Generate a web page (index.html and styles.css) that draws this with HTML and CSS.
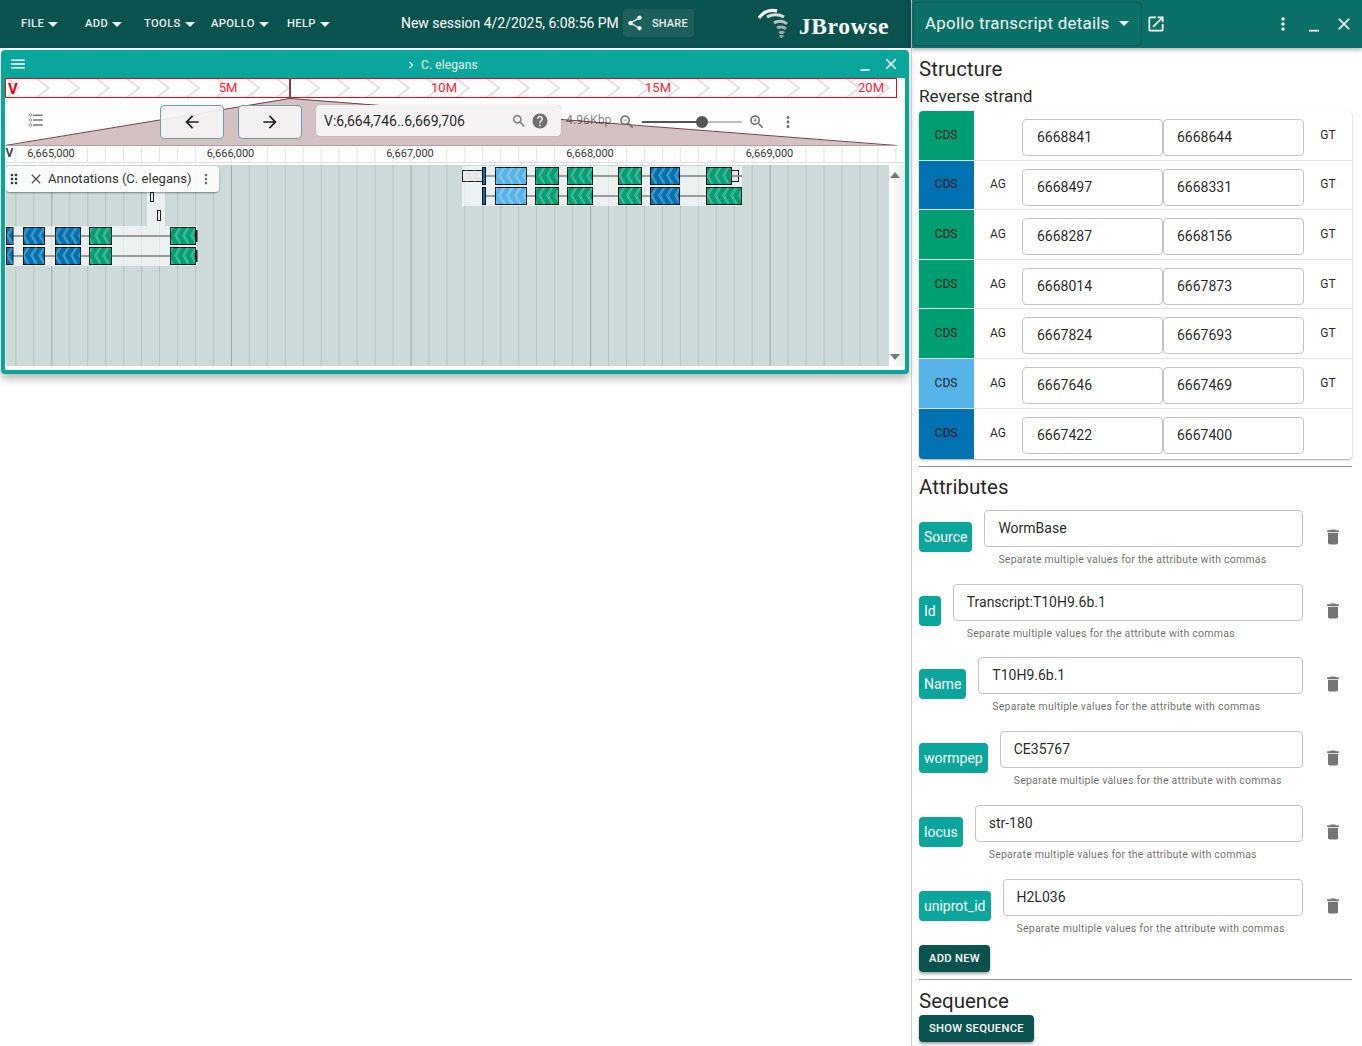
FILE: index.html
```html
<!DOCTYPE html>
<html lang="en">
<head>
    <meta charset="UTF-8">
    <title>JBrowse</title>
    <link rel="stylesheet" href="styles.css">
</head>
<body>
<svg class="sprites" width="0" height="0">
    <defs>
        <symbol id="i-drop" viewBox="0 0 24 24"><path d="M7 10l5 5 5-5z"/></symbol>
        <symbol id="i-back" viewBox="0 0 24 24"><path d="M20 11H7.83l5.59-5.59L12 4l-8 8 8 8 1.41-1.41L7.83 13H20v-2z"/></symbol>
        <symbol id="i-forward" viewBox="0 0 24 24"><path d="M12 4l-1.41 1.41L16.17 11H4v2h12.17l-5.58 5.59L12 20l8-8z"/></symbol>
        <symbol id="i-search" viewBox="0 0 24 24"><path d="M15.5 14h-.79l-.28-.27C15.41 12.59 16 11.11 16 9.5 16 5.91 13.09 3 9.5 3S3 5.91 3 9.5 5.91 16 9.5 16c1.61 0 3.09-.59 4.23-1.57l.27.28v.79l5 4.99L20.49 19l-4.99-5zm-6 0C7.01 14 5 11.99 5 9.5S7.01 5 9.5 5 14 7.01 14 9.5 11.99 14 9.5 14z"/></symbol>
        <symbol id="i-help" viewBox="0 0 24 24"><path d="M12 2C6.48 2 2 6.48 2 12s4.48 10 10 10 10-4.48 10-10S17.52 2 12 2zm1 17h-2v-2h2v2zm2.07-7.75l-.9.92C13.45 12.9 13 13.5 13 15h-2v-.5c0-1.1.45-2.1 1.17-2.83l1.24-1.26c.37-.36.59-.86.59-1.41 0-1.1-.9-2-2-2s-2 .9-2 2H8c0-2.21 1.79-4 4-4s4 1.79 4 4c0 .88-.36 1.68-.93 2.25z"/></symbol>
        <symbol id="i-zoomout" viewBox="0 0 24 24"><path d="M15.5 14h-.79l-.28-.27C15.41 12.59 16 11.11 16 9.5 16 5.91 13.09 3 9.5 3S3 5.91 3 9.5 5.91 16 9.5 16c1.61 0 3.09-.59 4.23-1.57l.27.28v.79l5 4.99L20.49 19l-4.99-5zm-6 0C7.01 14 5 11.99 5 9.5S7.01 5 9.5 5 14 7.01 14 9.5 11.99 14 9.5 14zM7 9h5v1H7z"/></symbol>
        <symbol id="i-zoomin" viewBox="0 0 24 24"><path d="M15.5 14h-.79l-.28-.27C15.41 12.59 16 11.11 16 9.5 16 5.91 13.09 3 9.5 3S3 5.91 3 9.5 5.91 16 9.5 16c1.61 0 3.09-.59 4.23-1.57l.27.28v.79l5 4.99L20.49 19l-4.99-5zm-6 0C7.01 14 5 11.99 5 9.5S7.01 5 9.5 5 14 7.01 14 9.5 11.99 14 9.5 14zM12 10h-2v2H9v-2H7V9h2V7h1v2h2v1z"/></symbol>
        <symbol id="i-more" viewBox="0 0 24 24"><path d="M12 8c1.1 0 2-.9 2-2s-.9-2-2-2-2 .9-2 2 .9 2 2 2zm0 2c-1.1 0-2 .9-2 2s.9 2 2 2 2-.9 2-2-.9-2-2-2zm0 6c-1.1 0-2 .9-2 2s.9 2 2 2 2-.9 2-2-.9-2-2-2z"/></symbol>
        <symbol id="i-close" viewBox="0 0 24 24"><path d="M19 6.41L17.59 5 12 10.59 6.41 5 5 6.41 10.59 12 5 17.59 6.41 19 12 13.41 17.59 19 19 17.59 13.41 12z"/></symbol>
        <symbol id="i-min" viewBox="0 0 24 24"><path d="M6 19h12v2H6z"/></symbol>
        <symbol id="i-menu" viewBox="0 0 24 24"><path d="M3 18h18v-2H3v2zm0-5h18v-2H3v2zm0-7v2h18V6H3z"/></symbol>
        <symbol id="i-share" viewBox="0 0 24 24"><path d="M18 16.08c-.76 0-1.44.3-1.96.77L8.91 12.7c.05-.23.09-.46.09-.7s-.04-.47-.09-.7l7.05-4.11c.54.5 1.25.81 2.04.81 1.66 0 3-1.34 3-3s-1.34-3-3-3-3 1.34-3 3c0 .24.04.47.09.7L8.04 9.81C7.5 9.31 6.79 9 6 9c-1.66 0-3 1.34-3 3s1.34 3 3 3c.79 0 1.5-.31 2.04-.81l7.12 4.16c-.05.21-.08.43-.08.65 0 1.61 1.31 2.92 2.92 2.92 1.61 0 2.92-1.31 2.92-2.92s-1.31-2.92-2.92-2.92z"/></symbol>
        <symbol id="i-open" viewBox="0 0 24 24"><path d="M19 19H5V5h7V3H5c-1.11 0-2 .9-2 2v14c0 1.1.89 2 2 2h14c1.1 0 2-.9 2-2v-7h-2v7zM14 3v2h3.59l-9.83 9.83 1.41 1.41L19 6.41V10h2V3h-7z"/></symbol>
        <symbol id="i-trash" viewBox="0 0 24 24"><path d="M6 19c0 1.1.9 2 2 2h8c1.1 0 2-.9 2-2V7H6v12zM19 4h-3.5l-1-1h-5l-1 1H5v2h14V4z"/></symbol>
        <symbol id="i-drag" viewBox="0 0 24 24"><path d="M11 18c0 1.1-.9 2-2 2s-2-.9-2-2 .9-2 2-2 2 .9 2 2zm-2-8c-1.1 0-2 .9-2 2s.9 2 2 2 2-.9 2-2-.9-2-2-2zm0-6c-1.1 0-2 .9-2 2s.9 2 2 2 2-.9 2-2-.9-2-2-2zm6 4c1.1 0 2-.9 2-2s-.9-2-2-2-2 .9-2 2 .9 2 2 2zm0 2c-1.1 0-2 .9-2 2s.9 2 2 2 2-.9 2-2-.9-2-2-2zm0 6c-1.1 0-2 .9-2 2s.9 2 2 2 2-.9 2-2-.9-2-2-2z"/></symbol>
        <symbol id="i-chevron" viewBox="0 0 24 24"><path d="M10 6L8.59 7.41 13.17 12l-4.58 4.59L10 18l6-6z"/></symbol>
        <symbol id="i-tracks" viewBox="0 0 24 24">
            <circle cx="4.5" cy="5.5" r="1.7" fill="none" stroke="currentColor" stroke-width="1"/>
            <circle cx="4.5" cy="12" r="1.7" fill="none" stroke="currentColor" stroke-width="1"/>
            <circle cx="4.5" cy="18.5" r="1.7" fill="none" stroke="currentColor" stroke-width="1"/>
            <path d="M8 4.5h13v2H8zM8 11h13v2H8zM8 17.5h13v2H8z"/>
        </symbol>
    </defs>
</svg>

<div class="app">
    <main class="main">
        <header class="topbar">
            <nav class="menu">
                <span class="menu-item item-file">FILE<svg class="icon-drop"><use href="#i-drop"/></svg></span>
                <span class="menu-item item-add">ADD<svg class="icon-drop"><use href="#i-drop"/></svg></span>
                <span class="menu-item item-tools">TOOLS<svg class="icon-drop"><use href="#i-drop"/></svg></span>
                <span class="menu-item item-apollo">APOLLO<svg class="icon-drop"><use href="#i-drop"/></svg></span>
                <span class="menu-item item-help">HELP<svg class="icon-drop"><use href="#i-drop"/></svg></span>
            </nav>
            <div class="session">New session 4/2/2025, 6:08:56 PM</div>
            <div class="share"><svg class="icon-share"><use href="#i-share"/></svg>SHARE</div>
            <div class="logo">
                <svg class="logo-mark" width="34" height="32" viewBox="0 0 34 32">
                    <path d="M1 11 C5 5 12 2 19 4" fill="none" stroke="#fff" stroke-width="3.4"/>
                    <path d="M9 10 C14 7 21 7 26 10" fill="none" stroke="#d9dedd" stroke-width="3"/>
                    <path d="M16 16 C20 13 26 14 29 17" fill="none" stroke="#b9c2c0" stroke-width="3"/>
                    <path d="M19 21 C22 19 26 20 28 22" fill="none" stroke="#a5aead" stroke-width="3"/>
                    <path d="M21 26 C23 25 25 25 26 26 M22 30 C23 29 24 29 25 30" fill="none" stroke="#9aa3a2" stroke-width="3"/>
                </svg>
                <span class="logo-text">JBrowse</span>
            </div>
        </header>

        <section class="view">
            <div class="view-title">
                <svg class="icon-18"><use href="#i-menu"/></svg>
                <div class="view-name"><svg class="icon-14"><use href="#i-chevron"/></svg>C. elegans</div>
                <svg class="icon-18 view-min"><use href="#i-min"/></svg>
                <svg class="icon-18 view-close"><use href="#i-close"/></svg>
            </div>
            <div class="view-body">
                <svg class="overview" width="900" height="20">
                    <defs>
                        <pattern id="ov-chev" width="30" height="20" patternUnits="userSpaceOnUse" x="-12">
                            <polyline points="13,0 26,10 13,20" fill="none" stroke="#dcdcdc" stroke-width="1.6"/>
                        </pattern>
                    </defs>
                    <rect x="0.5" y="0.5" width="891" height="19" fill="url(#ov-chev)" stroke="#e8001c"/>
                    <rect x="284" y="0" width="2" height="20" fill="#7a4048"/>
                    <text class="ov-v" x="3" y="15.5">V</text>
                    <text class="ov-label" x="223" y="14" text-anchor="middle">5M</text>
                    <text class="ov-label" x="439" y="14" text-anchor="middle">10M</text>
                    <text class="ov-label" x="653" y="14" text-anchor="middle">15M</text>
                    <text class="ov-label" x="866" y="14" text-anchor="middle">20M</text>
                </svg>
                <div class="nav">
                    <svg class="nav-zoom" width="900" height="48">
                        <polygon points="0,48 285,0 892,48" fill="#d3c1c4"/>
                        <polyline points="0,47.5 285,0.5 892,47.5" fill="none" stroke="#7a4048" stroke-width="1"/>
                        <line x1="0" y1="47.5" x2="892" y2="47.5" stroke="#b89ea2"/>
                    </svg>
                    <svg class="icon-tracks"><use href="#i-tracks"/></svg>
                    <button class="nav-btn btn-back"><svg class="icon-20"><use href="#i-back"/></svg></button>
                    <button class="nav-btn"><svg class="icon-20"><use href="#i-forward"/></svg></button>
                    <div class="locbox">
                        <span class="loc-text">V:6,664,746..6,669,706</span>
                        <svg class="icon-16 grey"><use href="#i-search"/></svg>
                        <svg class="icon-18 grey"><use href="#i-help"/></svg>
                    </div>
                    <span class="bp">4.96Kbp</span>
                    <svg class="icon-18 grey"><use href="#i-zoomout"/></svg>
                    <div class="slider"><div class="slider-fill"></div><div class="slider-thumb"></div></div>
                    <svg class="icon-18 grey"><use href="#i-zoomin"/></svg>
                    <svg class="icon-18 grey nav-more"><use href="#i-more"/></svg>
                </div>
                <svg class="ruler" width="900" height="19">
                    <defs>
                        <pattern id="ruler-grid" width="17.96" height="16" patternUnits="userSpaceOnUse" x="10.3">
                            <rect x="0" y="0" width="1" height="16" fill="#e3e3e3"/>
                        </pattern>
                    </defs>
                    <rect x="0" y="0" width="900" height="16" fill="url(#ruler-grid)"/>
                    <rect x="0" y="16" width="900" height="1" fill="#dfdfdf"/>
                    <text class="ruler-v" x="0.5" y="11">V</text>
                    <text class="ruler-label" x="46" y="11" text-anchor="middle">6,665,000</text>
                    <text class="ruler-label" x="225.5" y="11" text-anchor="middle">6,666,000</text>
                    <text class="ruler-label" x="405" y="11" text-anchor="middle">6,667,000</text>
                    <text class="ruler-label" x="585" y="11" text-anchor="middle">6,668,000</text>
                    <text class="ruler-label" x="764.5" y="11" text-anchor="middle">6,669,000</text>
                </svg>
                <div class="track-row">
                    <div class="track">
                        <svg class="track-canvas" width="883" height="201">
                            <defs>
                                <pattern id="grid" width="179.6" height="201" patternUnits="userSpaceOnUse" x="45.3">
                                    <rect x="0" width="1" height="201" fill="#97a6a6"/>
                                    <rect x="17.96" width="1" height="201" fill="#b3c1c1"/>
                                    <rect x="35.92" width="1" height="201" fill="#b3c1c1"/>
                                    <rect x="53.88" width="1" height="201" fill="#b3c1c1"/>
                                    <rect x="71.84" width="1" height="201" fill="#b3c1c1"/>
                                    <rect x="89.8" width="1" height="201" fill="#b3c1c1"/>
                                    <rect x="107.76" width="1" height="201" fill="#b3c1c1"/>
                                    <rect x="125.72" width="1" height="201" fill="#b3c1c1"/>
                                    <rect x="143.68" width="1" height="201" fill="#b3c1c1"/>
                                    <rect x="161.64" width="1" height="201" fill="#b3c1c1"/>
                                </pattern>
                                <pattern id="chev" width="8" height="17" patternUnits="userSpaceOnUse">
                                    <polyline points="6.5,0 1.5,8.5 6.5,17" fill="none" stroke="#fff" stroke-opacity=".25" stroke-width="2.5"/>
                                </pattern>
                                <g id="left-row">
                                    <line x1="0" y1="9" x2="190" y2="9" stroke="#808080" stroke-width="1.6"/>
                                    <rect class="cds blue" x="0.5" y="0.5" width="6.5" height="17"/><rect class="chevs" x="0.5" y="0.5" width="6.5" height="17"/>
                                    <rect class="cds blue" x="17.5" y="0.5" width="21" height="17"/><rect class="chevs" x="17.5" y="0.5" width="21" height="17"/>
                                    <rect class="cds blue" x="49.5" y="0.5" width="25" height="17"/><rect class="chevs" x="49.5" y="0.5" width="25" height="17"/>
                                    <rect class="cds green" x="83.5" y="0.5" width="22" height="17"/><rect class="chevs" x="83.5" y="0.5" width="22" height="17"/>
                                    <rect class="cds green" x="164.5" y="0.5" width="25" height="17"/><rect class="chevs" x="164.5" y="0.5" width="25" height="17"/>
                                    <rect x="190" y="3" width="1.5" height="12" fill="#222"/>
                                </g>
                                <g id="right-row">
                                    <line x1="0" y1="9" x2="260" y2="9" stroke="#808080" stroke-width="1.6"/>
                                    <rect class="cds blue" x="0.5" y="0.5" width="3" height="17"/>
                                    <rect class="cds sky" x="13.5" y="0.5" width="31" height="17"/><rect class="chevs" x="13.5" y="0.5" width="31" height="17"/>
                                    <rect class="cds green" x="53.5" y="0.5" width="23" height="17"/><rect class="chevs" x="53.5" y="0.5" width="23" height="17"/>
                                    <rect class="cds green" x="85.5" y="0.5" width="25" height="17"/><rect class="chevs" x="85.5" y="0.5" width="25" height="17"/>
                                    <rect class="cds green" x="136.5" y="0.5" width="23" height="17"/><rect class="chevs" x="136.5" y="0.5" width="23" height="17"/>
                                    <rect class="cds blue" x="168.5" y="0.5" width="29" height="17"/><rect class="chevs" x="168.5" y="0.5" width="29" height="17"/>
                                </g>
                            </defs>
                            <rect width="883" height="201" fill="#cddada"/>
                            <rect width="883" height="201" fill="url(#grid)"/>

                            <rect class="lane" x="141" y="1" width="18" height="60"/>
                            <rect class="tiny" x="144.5" y="27.5" width="3" height="9"/>
                            <rect class="tiny" x="151.5" y="45.5" width="3" height="10"/>

                            <rect class="lane" x="456" y="1" width="280" height="40"/>
                            <g transform="translate(456,2)">
                                <rect class="utr" x="0.5" y="3.5" width="20" height="11"/><rect class="chevs" x="0.5" y="3.5" width="20" height="11"/>
                                <rect class="utr" x="269.5" y="3.5" width="7" height="11"/>
                            </g>
                            <use href="#right-row" x="476" y="2"/>
                            <g transform="translate(700,2)">
                                <rect class="cds green" x="0.5" y="0.5" width="25" height="17"/><rect class="chevs" x="0.5" y="0.5" width="25" height="17"/>
                            </g>
                            <use href="#right-row" x="476" y="22"/>
                            <g transform="translate(700,22)">
                                <rect class="cds green" x="0.5" y="0.5" width="35" height="17"/><rect class="chevs" x="0.5" y="0.5" width="35" height="17"/>
                            </g>

                            <rect class="lane" x="0" y="61" width="191" height="40"/>
                            <use href="#left-row" y="62"/>
                            <use href="#left-row" y="82"/>
                        </svg>
                        <div class="track-label">
                            <svg class="icon-16"><use href="#i-drag"/></svg>
                            <svg class="icon-16 label-close"><use href="#i-close"/></svg>
                            <span class="label-text">Annotations (C. elegans)</span>
                            <svg class="icon-16 grey"><use href="#i-more"/></svg>
                        </div>
                    </div>
                    <div class="scrollbar">
                        <div class="arrow-up"></div>
                        <div class="arrow-down"></div>
                    </div>
                </div>
            </div>
        </section>
    </main>

    <aside class="drawer">
        <header class="drawer-head">
            <div class="drawer-select">Apollo transcript details<svg class="icon-24"><use href="#i-drop"/></svg></div>
            <svg class="icon-20 drawer-open"><use href="#i-open"/></svg>
            <svg class="icon-20 drawer-more"><use href="#i-more"/></svg>
            <svg class="icon-20 drawer-min"><use href="#i-min"/></svg>
            <svg class="icon-20 drawer-close"><use href="#i-close"/></svg>
        </header>
        <div class="drawer-body">
            <h2 class="heading head-structure">Structure</h2>
            <div class="strand">Reverse strand</div>
            <div class="exons">
                <div class="exon"><div class="type green">CDS</div><div class="site"></div><div class="field">6668841</div><div class="field">6668644</div><div class="site">GT</div></div>
                <div class="exon"><div class="type blue">CDS</div><div class="site">AG</div><div class="field">6668497</div><div class="field">6668331</div><div class="site">GT</div></div>
                <div class="exon"><div class="type green">CDS</div><div class="site">AG</div><div class="field">6668287</div><div class="field">6668156</div><div class="site">GT</div></div>
                <div class="exon"><div class="type green">CDS</div><div class="site">AG</div><div class="field">6668014</div><div class="field">6667873</div><div class="site">GT</div></div>
                <div class="exon"><div class="type green">CDS</div><div class="site">AG</div><div class="field">6667824</div><div class="field">6667693</div><div class="site">GT</div></div>
                <div class="exon"><div class="type sky">CDS</div><div class="site">AG</div><div class="field">6667646</div><div class="field">6667469</div><div class="site">GT</div></div>
                <div class="exon"><div class="type blue">CDS</div><div class="site">AG</div><div class="field">6667422</div><div class="field">6667400</div><div class="site"></div></div>
            </div>
            <hr class="rule rule-attrs">
            <h2 class="heading head-attrs">Attributes</h2>
            <div class="attr"><span class="chip">Source</span><div class="attr-main"><div class="attr-box">WormBase</div><div class="attr-help">Separate multiple values for the attribute with commas</div></div><svg class="icon-trash"><use href="#i-trash"/></svg></div>
            <div class="attr"><span class="chip">Id</span><div class="attr-main"><div class="attr-box">Transcript:T10H9.6b.1</div><div class="attr-help">Separate multiple values for the attribute with commas</div></div><svg class="icon-trash"><use href="#i-trash"/></svg></div>
            <div class="attr"><span class="chip">Name</span><div class="attr-main"><div class="attr-box">T10H9.6b.1</div><div class="attr-help">Separate multiple values for the attribute with commas</div></div><svg class="icon-trash"><use href="#i-trash"/></svg></div>
            <div class="attr"><span class="chip">wormpep</span><div class="attr-main"><div class="attr-box">CE35767</div><div class="attr-help">Separate multiple values for the attribute with commas</div></div><svg class="icon-trash"><use href="#i-trash"/></svg></div>
            <div class="attr"><span class="chip">locus</span><div class="attr-main"><div class="attr-box">str-180</div><div class="attr-help">Separate multiple values for the attribute with commas</div></div><svg class="icon-trash"><use href="#i-trash"/></svg></div>
            <div class="attr"><span class="chip">uniprot_id</span><div class="attr-main"><div class="attr-box">H2L036</div><div class="attr-help">Separate multiple values for the attribute with commas</div></div><svg class="icon-trash"><use href="#i-trash"/></svg></div>
            <button class="action action-add">ADD NEW</button>
            <hr class="rule rule-seq">
            <h2 class="heading head-seq">Sequence</h2>
            <button class="action">SHOW SEQUENCE</button>
        </div>
    </aside>
</div>
</body>
</html>
```

FILE: styles.css
```css
*{
    padding:0;
    margin:0;
    box-sizing:border-box;
}
html,body{
    height:100%;
    overflow:hidden;
}
body{
    font-family:Roboto,"Liberation Sans",sans-serif;
    color:rgba(0,0,0,.87);
    background:#fff;
    font-size:14px;
}
svg{
    fill:currentColor;
    display:block;
    flex:none;
}
.sprites{
    position:absolute;
}
.app{
    display:flex;
    height:100%;
}
.main{
    width:911px;
    flex:none;
}

/* top bar */
.topbar{
    height:48px;
    background:#0a524e;
    color:#fff;
    display:flex;
    align-items:center;
    margin-bottom:2px;
}
.menu{
    display:flex;
    padding-left:21px;
    width:401px;
    flex:none;
}
.menu-item{
    display:flex;
    align-items:center;
    font-size:11.2px;
    font-weight:500;
    letter-spacing:.35px;
    color:#e9f1f0;
    height:24px;
    position:relative;
    top:-1px;
}
.item-file{width:64px}
.item-add{width:59px}
.item-tools{width:67px}
.item-apollo{width:76px}
.item-help{width:90px}
.icon-drop{
    width:24px;
    height:24px;
    margin-left:-3px;
    position:relative;
    top:1px;
}
.session{
    font-size:13.95px;
    width:222px;
    flex:none;
    white-space:nowrap;
    position:relative;
    top:-1px;
}
.share{
    width:71px;
    height:28px;
    display:flex;
    align-items:center;
    background:rgba(255,255,255,.08);
    border-radius:4px;
    font-size:11px;
    font-weight:500;
    letter-spacing:.15px;
    padding-left:3px;
    gap:8px;
    position:relative;
    top:-1px;
    color:#e9f1f0;
}
.icon-share{
    width:18px;
    height:18px;
}
.logo{
    display:flex;
    align-items:center;
    margin-left:64px;
}
.logo-mark{
    margin-right:7px;
    position:relative;
    top:-1px;
}
.logo-text{
    font-family:"Liberation Serif",serif;
    font-weight:700;
    font-size:23.5px;
    letter-spacing:.6px;
    position:relative;
    top:2px;
}

/* linear genome view */
.view{
    margin-left:1px;
    width:908px;
    height:324px;
    background:#0aa69b;
    border-radius:4px;
    padding:0 4px 4px;
    box-shadow:0 5px 8px rgba(0,0,0,.28);
    color:#fff;
}
.view-title{
    height:28px;
    display:flex;
    align-items:center;
    padding-left:4px;
    position:relative;
}
.view-name{
    display:flex;
    align-items:center;
    font-size:12px;
    letter-spacing:.1px;
    color:#e8f6f5;
    margin-left:377px;
    padding-top:2px;
    gap:3px;
}
.view-min{
    margin-left:auto;
    margin-right:8px;
}
.view-close{
    margin-right:5px;
}
.view-body{
    background:#fff;
    height:292px;
    color:rgba(0,0,0,.87);
}
.overview .ov-v{
    font-size:15px;
    font-weight:700;
    fill:#e8001c;
}
.ov-label{
    font-size:13px;
    fill:#ff1a38;
}
.nav{
    position:relative;
    height:48px;
    display:flex;
    align-items:flex-start;
    padding-top:7px;
}
.nav-zoom{
    position:absolute;
    left:0;
    top:0;
}
.nav>*:not(.nav-zoom){
    position:relative;
}
.icon-tracks{
    width:18px;
    height:18px;
    margin:6px 106px 0 22px;
    color:#777;
}
.nav-btn{
    width:64px;
    height:34px;
    background:rgba(245,244,244,.92);
    border:1px solid #6f9e9c;
    border-radius:4px;
    display:flex;
    align-items:center;
    justify-content:center;
    color:rgba(0,0,0,.87);
    margin-right:14px;
}
.btn-back{
    margin-left:9px;
}
.locbox{
    width:245px;
    height:31px;
    background:#f4f2f2;
    border-radius:4px;
    box-shadow:0 0 1px rgba(0,0,0,.4);
    display:flex;
    align-items:center;
    padding:0 12px 0 8px;
    gap:4px;
    margin-right:5px;
}
.loc-text{
    font-size:14px;
    margin-right:auto;
}
.grey{
    color:#6f6f6f;
}
.bp{
    font-size:12.3px;
    color:rgba(0,0,0,.5);
    width:52px;
    margin-top:8px;
}
.nav .icon-18{
    margin-top:8px;
}
.locbox .icon-18,.nav .locbox .icon-18{
    margin-top:0;
}
.icon-14{width:14px;height:14px}
.icon-16{width:16px;height:16px}
.icon-18{width:18px;height:18px}
.icon-20{width:20px;height:20px}
.icon-24{width:24px;height:24px}
.slider{
    width:100px;
    height:12px;
    margin:11px 6px 0 6px;
    position:relative;
}
.slider::before{
    content:"";
    position:absolute;
    left:0;
    right:0;
    top:5px;
    height:2px;
    background:#bdbdbd;
}
.slider-fill{
    position:absolute;
    left:0;
    top:5px;
    height:2px;
    width:60px;
    background:#555;
}
.slider-thumb{
    position:absolute;
    left:54px;
    top:0;
    width:12px;
    height:12px;
    border-radius:50%;
    background:#555;
}
.nav-more{
    margin-left:13px;
}
.ruler-label{
    font-size:11px;
    fill:#333;
    stroke:#fff;
    stroke-width:3px;
    paint-order:stroke;
}
.ruler-v{
    font-size:12px;
    font-weight:700;
    fill:#444;
}
.track-row{
    display:flex;
    height:201px;
}
.track{
    position:relative;
    width:884px;
    padding-left:1px;
}
.track-canvas .lane{fill:#fff;fill-opacity:.6}
.cds{stroke:#111;stroke-width:1}
.cds.green,.type.green{fill:#009e73;background:#009e73}
.cds.blue,.type.blue{fill:#0072b2;background:#0072b2}
.cds.sky,.type.sky{fill:#56b4e9;background:#56b4e9}
.chevs{fill:url(#chev)}
.utr{fill:#e4e4e4;stroke:#222;stroke-width:1}
.tiny{fill:#eee;stroke:#222;stroke-width:1}
.track-label{
    position:absolute;
    left:1px;
    top:1px;
    width:213px;
    height:26px;
    background:rgba(255,255,255,.9);
    border-radius:4px;
    box-shadow:0 1px 2px rgba(0,0,0,.4);
    display:flex;
    align-items:center;
    color:#333;
}
.label-close{
    margin-left:6px;
    margin-right:3px;
    color:#555;
}
.label-text{
    font-size:13px;
    letter-spacing:.03px;
    margin-right:6px;
    margin-left:1px;
    padding-bottom:2px;
    white-space:nowrap;
}
.scrollbar{
    width:16px;
    height:201px;
    background:linear-gradient(to right,#fff,#ececec);
    position:relative;
}
.arrow-up,.arrow-down{
    position:absolute;
    left:1px;
    width:0;
    height:0;
    border-left:5px solid transparent;
    border-right:5px solid transparent;
}
.arrow-up{
    top:7px;
    border-bottom:6px solid #777;
}
.arrow-down{
    top:189px;
    border-top:6px solid #777;
}

/* right hand drawer */
.drawer{
    flex:1;
    border-left:1px solid #ccc;
    min-width:0;
}
.drawer-head{
    height:48px;
    background:#0b7067;
    color:#fff;
    display:flex;
    align-items:center;
    box-shadow:0 2px 4px rgba(0,0,0,.3);
    position:relative;
}
.drawer-select{
    width:229px;
    height:44px;
    border:1px solid #0a5a54;
    border-radius:4px;
    margin-left:1px;
    display:flex;
    align-items:center;
    padding:0 0 2px 11px;
    font-size:16.9px;
    letter-spacing:.25px;
    gap:2px;
    color:#f1f7f6;
}
.drawer-open{margin-left:4px}
.drawer-more{margin-left:107px}
.drawer-min{margin-left:11px}
.drawer-close{margin-left:10px}
.drawer-body{
    padding:8px 10px 0 7px;
}
.heading{
    font-size:20.5px;
    font-weight:400;
    height:26px;
    line-height:26px;
}
.strand{
    font-size:17.2px;
    line-height:24px;
    margin-top:2px;
    margin-bottom:3px;
}
.exons{
    height:348px;
    display:flex;
    flex-direction:column;
    border-radius:4px;
    box-shadow:0 1px 2px rgba(0,0,0,.35);
    overflow:hidden;
}
.exon{
    flex:0 0 49.6px;
    display:grid;
    grid-template-columns:55px 48px 141px 141px 48px;
    border-bottom:1px solid #e0e0e0;
}
.exon:last-child{
    flex:1;
    border-bottom:none;
}
.type{
    font-size:12px;
    display:flex;
    align-items:center;
    justify-content:center;
    padding:0 1px 1px 0;
}
.site{
    font-size:12px;
    display:flex;
    align-items:center;
    justify-content:center;
    padding-bottom:1px;
}
.field{
    height:37px;
    margin-top:8px;
    border:1px solid #c4c4c4;
    border-radius:4px;
    padding:0 14px;
    font-size:14px;
    line-height:34px;
}
.field + .field{
    padding-left:13px;
}
.rule{
    border:none;
    border-top:1px solid #8f8f8f;
}
.rule-attrs{margin-top:7px;margin-bottom:7px}
.head-attrs{margin-bottom:-.1px}
.attr{
    height:73.75px;
    display:flex;
    padding-top:10px;
}
.chip{
    background:#0aa69b;
    color:#fff;
    border-radius:4px;
    height:30px;
    line-height:30px;
    padding:0 5px;
    margin-top:12px;
    margin-right:12px;
    font-size:14px;
    flex:none;
}
.attr-main{
    flex:1;
    min-width:0;
}
.attr-box{
    height:37px;
    border:1px solid #c4c4c4;
    border-radius:4px;
    padding:0 13px;
    font-size:14px;
    line-height:35px;
}
.attr-help{
    font-size:10.5px;
    letter-spacing:.235px;
    color:rgba(0,0,0,.6);
    margin-top:6px;
    padding-left:14px;
    line-height:13px;
}
.icon-trash{
    width:20px;
    height:20px;
    color:#757575;
    margin:17px 9px 0 20px;
}
.action{
    display:block;
    height:27px;
    padding:0 10px;
    background:#0a524e;
    color:#fff;
    font-family:inherit;
    font-size:11.2px;
    font-weight:500;
    letter-spacing:.3px;
    border:none;
    border-radius:4px;
    box-shadow:0 2px 3px rgba(0,0,0,.35);
}
.action-add{margin-top:2.4px}
.rule-seq{margin-top:7px;margin-bottom:8px}
.head-seq{margin-bottom:1px}
```
